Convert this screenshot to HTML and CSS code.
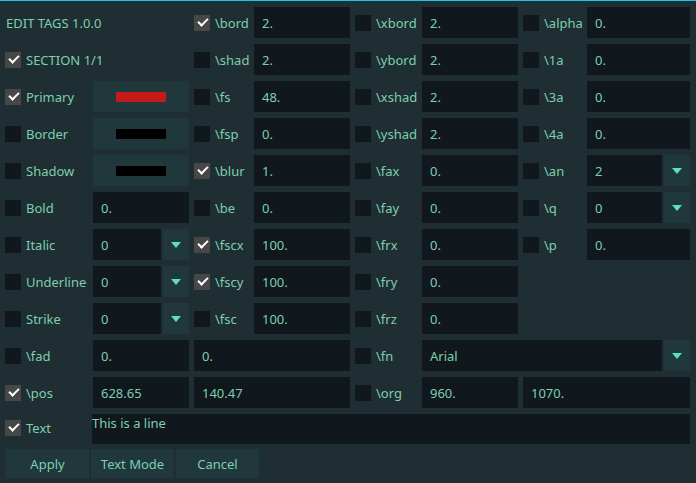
FILE: index.html
```html
<!DOCTYPE html>
<html>
<head>
<meta charset="utf-8">
<link rel="stylesheet" href="styles.css">
</head>
<body>
<div class="panel">
  <div class="grid">
    <!-- row 1 -->
    <div class="title">EDIT TAGS 1.0.0</div>
    <div></div>
    <div class="cb on"></div><div class="lbl">\bord</div><div class="in">2.</div>
    <div class="cb"></div><div class="lbl">\xbord</div><div class="in">2.</div>
    <div class="cb"></div><div class="lbl">\alpha</div><div class="in">0.</div>
    <!-- row 2 -->
    <div class="cb on"></div><div class="lbl">SECTION 1/1</div><div></div>
    <div class="cb"></div><div class="lbl">\shad</div><div class="in">2.</div>
    <div class="cb"></div><div class="lbl">\ybord</div><div class="in">2.</div>
    <div class="cb"></div><div class="lbl">\1a</div><div class="in">0.</div>
    <!-- row 3 -->
    <div class="cb on"></div><div class="lbl">Primary</div><div class="swatch"><span class="chip red"></span></div>
    <div class="cb"></div><div class="lbl">\fs</div><div class="in">48.</div>
    <div class="cb"></div><div class="lbl">\xshad</div><div class="in">2.</div>
    <div class="cb"></div><div class="lbl">\3a</div><div class="in">0.</div>
    <!-- row 4 -->
    <div class="cb"></div><div class="lbl">Border</div><div class="swatch"><span class="chip black"></span></div>
    <div class="cb"></div><div class="lbl">\fsp</div><div class="in">0.</div>
    <div class="cb"></div><div class="lbl">\yshad</div><div class="in">2.</div>
    <div class="cb"></div><div class="lbl">\4a</div><div class="in">0.</div>
    <!-- row 5 -->
    <div class="cb"></div><div class="lbl">Shadow</div><div class="swatch"><span class="chip black"></span></div>
    <div class="cb on"></div><div class="lbl">\blur</div><div class="in">1.</div>
    <div class="cb"></div><div class="lbl">\fax</div><div class="in">0.</div>
    <div class="cb"></div><div class="lbl">\an</div><div class="combo"><div class="in">2</div><div class="arrow"></div></div>
    <!-- row 6 -->
    <div class="cb"></div><div class="lbl">Bold</div><div class="in">0.</div>
    <div class="cb"></div><div class="lbl">\be</div><div class="in">0.</div>
    <div class="cb"></div><div class="lbl">\fay</div><div class="in">0.</div>
    <div class="cb"></div><div class="lbl">\q</div><div class="combo"><div class="in">0</div><div class="arrow"></div></div>
    <!-- row 7 -->
    <div class="cb"></div><div class="lbl">Italic</div><div class="combo"><div class="in">0</div><div class="arrow"></div></div>
    <div class="cb on"></div><div class="lbl">\fscx</div><div class="in">100.</div>
    <div class="cb"></div><div class="lbl">\frx</div><div class="in">0.</div>
    <div class="cb"></div><div class="lbl">\p</div><div class="in">0.</div>
    <!-- row 8 -->
    <div class="cb"></div><div class="lbl">Underline</div><div class="combo"><div class="in">0</div><div class="arrow"></div></div>
    <div class="cb on"></div><div class="lbl">\fscy</div><div class="in">100.</div>
    <div class="cb"></div><div class="lbl">\fry</div><div class="in">0.</div>
    <div class="skip3"></div>
    <!-- row 9 -->
    <div class="cb"></div><div class="lbl">Strike</div><div class="combo"><div class="in">0</div><div class="arrow"></div></div>
    <div class="cb"></div><div class="lbl">\fsc</div><div class="in">100.</div>
    <div class="cb"></div><div class="lbl">\frz</div><div class="in">0.</div>
    <div class="skip3"></div>
    <!-- row 10 -->
    <div class="cb"></div><div class="lbl">\fad</div><div class="in">0.</div>
    <div class="in span3">0.</div>
    <div class="cb"></div><div class="lbl">\fn</div><div class="combo span4"><div class="in">Arial</div><div class="arrow"></div></div>
    <!-- row 11 -->
    <div class="cb on"></div><div class="lbl">\pos</div><div class="in">628.65</div>
    <div class="in span3">140.47</div>
    <div class="cb"></div><div class="lbl">\org</div><div class="in">960.</div>
    <div class="in span3">1070.</div>
    <!-- row 12 -->
    <div class="cb on last"></div><div class="lbl last">Text</div><div class="textbox">This is a line</div>
  </div>
  <div class="buttons">
    <div class="btn">Apply</div>
    <div class="btn">Text Mode</div>
    <div class="btn">Cancel</div>
  </div>
</div>
</body>
</html>
```

FILE: styles.css
```css
html, body {
  margin: 0;
  padding: 0;
  background: #1f2e32;
  width: 696px;
  height: 483px;
  overflow: hidden;
}
.panel {
  border-top: 1px solid #1bc6ea;
  padding: 6px 6px 0 5px;
  font-family: "Noto Sans", sans-serif;
  font-size: 13px;
  color: #7dcfae;
}
.grid {
  display: grid;
  grid-template-columns: 16px 62px 96px 16px 34px 96px 16px 41px 96px 16px 38px 103px;
  grid-template-rows: repeat(11, 31px) 30px;
  column-gap: 5px;
  row-gap: 6px;
  align-items: center;
}
.title {
  grid-column: span 2;
  padding-left: 1px;
  white-space: nowrap;
}
.cb {
  width: 16px;
  height: 16px;
  background: #10171d;
  position: relative;
}
.cb.on {
  background: #474747;
}
.cb.on::after {
  content: "";
  position: absolute;
  left: 4px;
  top: 3px;
  width: 8px;
  height: 4px;
  border-left: 2px solid #ffffff;
  border-bottom: 2px solid #ffffff;
  transform: rotate(-45deg);
  transform-origin: center;
}
.lbl {
  white-space: nowrap;
}
.last {
  margin-top: -2px;
}
.in {
  height: 31px;
  background: #10171d;
  padding-left: 8px;
  display: flex;
  align-items: center;
  box-sizing: border-box;
  white-space: nowrap;
}
.span3 { grid-column: span 3; }
.span4 { grid-column: span 4; }
.skip3 { grid-column: span 3; }
.combo {
  display: flex;
  gap: 2px;
  height: 31px;
}
.combo .in {
  flex: 1;
}
.arrow {
  width: 26px;
  background: #20373c;
  display: flex;
  align-items: center;
  justify-content: center;
}
.arrow::before {
  content: "";
  width: 0;
  height: 0;
  border-left: 5px solid transparent;
  border-right: 5px solid transparent;
  border-top: 6px solid #5ee0b8;
}
.swatch {
  height: 31px;
  background: #20373c;
  display: flex;
  align-items: center;
  justify-content: center;
}
.chip {
  width: 50px;
  height: 10px;
}
.chip.red { background: #c41a1a; }
.chip.black { background: #000000; }
.textbox {
  grid-column: 3 / span 10;
  margin-left: -1px;
  height: 30px;
  margin-top: -1px;
  background: #10171d;
  box-sizing: border-box;
  padding-top: 0;
  line-height: 18px;
}
.buttons {
  display: flex;
  gap: 2px;
  margin-top: 5px;
  padding-left: 1px;
}
.btn {
  width: 83px;
  height: 29px;
  background: #20373c;
  display: flex;
  align-items: center;
  justify-content: center;
}
```
